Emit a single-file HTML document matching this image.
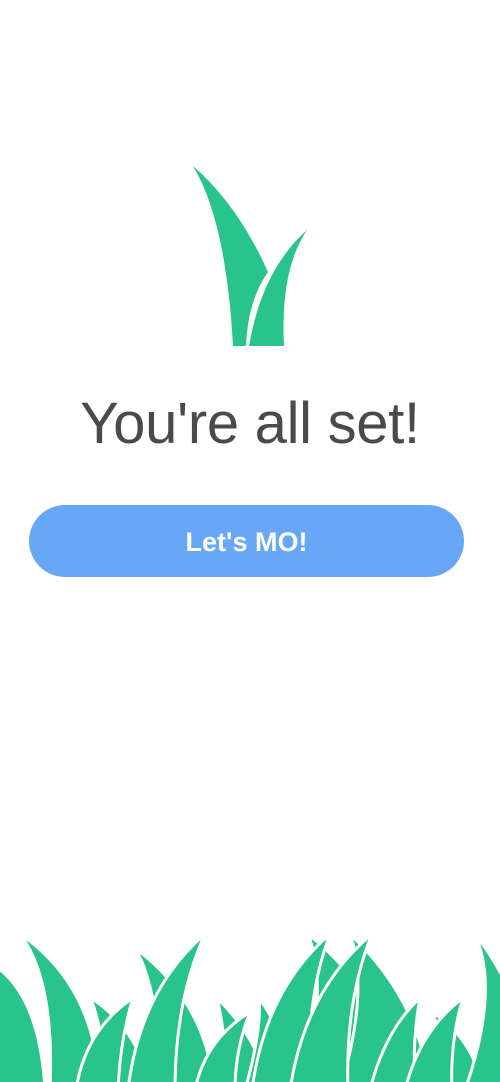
<!DOCTYPE html>
<html><head><meta charset="utf-8"><style>
html,body{margin:0;padding:0;background:#fff;width:500px;height:1082px;overflow:hidden;position:relative;font-family:"Liberation Sans",sans-serif}
.t{position:absolute;left:0;width:500px;top:390px;text-align:center;font-size:58px;color:#4a4a4a;letter-spacing:-0.3px}
.b{position:absolute;left:29px;top:505px;width:435px;height:72px;border-radius:36px;background:#68a7f6;color:#fff;font-weight:bold;font-size:27px;text-align:center;line-height:74px}
svg{position:absolute;left:0;top:0}
</style></head><body>
<svg width="500" height="1082" viewBox="0 0 500 1082">
<g fill="#29c38c">
<path d="M193 166 Q226 220 233 346 L246 346 Q248 300 268 272 Q238 205 193 166 Z"/>
<path d="M307 230 Q262 270 249 346 L284 346 Q280 270 307 230 Z"/>
</g>
<g fill="#29c38c" stroke="#fff" stroke-width="3" stroke-linejoin="round">
<path d="M-30 1090 Q-20 1000 -2 968 Q40 1000 45 1090 Z"/>
<path d="M50 1090 Q55 980 20 934 Q95 985 100 1090 Z"/>
<path d="M108 1090 Q105 1040 91 998 Q140 1030 150 1090 Z"/>
<path d="M76 1090 Q85 1030 133 998 Q120 1040 118 1090 Z"/>
<path d="M160 1090 Q160 990 135 948 Q205 1000 215 1090 Z"/>
<path d="M128 1090 Q140 990 205 934 Q175 1000 175 1090 Z"/>
<path d="M228 1090 Q225 1030 217 998 Q260 1040 268 1090 Z"/>
<path d="M195 1090 Q205 1040 250 1012 Q235 1050 235 1090 Z"/>
<path d="M245 1090 Q262 1030 259 998 Q290 1040 292 1090 Z"/>
<path d="M300 1090 Q330 990 308 934 Q390 1000 395 1090 Z"/>
<path d="M252 1090 Q265 990 330 934 Q305 1000 310 1090 Z"/>
<path d="M340 1090 Q370 990 350 934 Q420 1000 430 1090 Z"/>
<path d="M290 1090 Q305 990 372 934 Q345 1000 348 1090 Z"/>
<path d="M370 1090 Q385 1030 420 998 Q412 1040 415 1090 Z"/>
<path d="M440 1090 Q445 1040 432 1012 Q475 1040 482 1090 Z"/>
<path d="M405 1090 Q420 1030 463 998 Q450 1040 452 1090 Z"/>
<path d="M465 1090 Q500 990 475 934 Q520 990 540 1090 Z"/>
</g>
</svg>
<div class="t">You're all set!</div>
<div class="b">Let's MO!</div>
</body></html>
